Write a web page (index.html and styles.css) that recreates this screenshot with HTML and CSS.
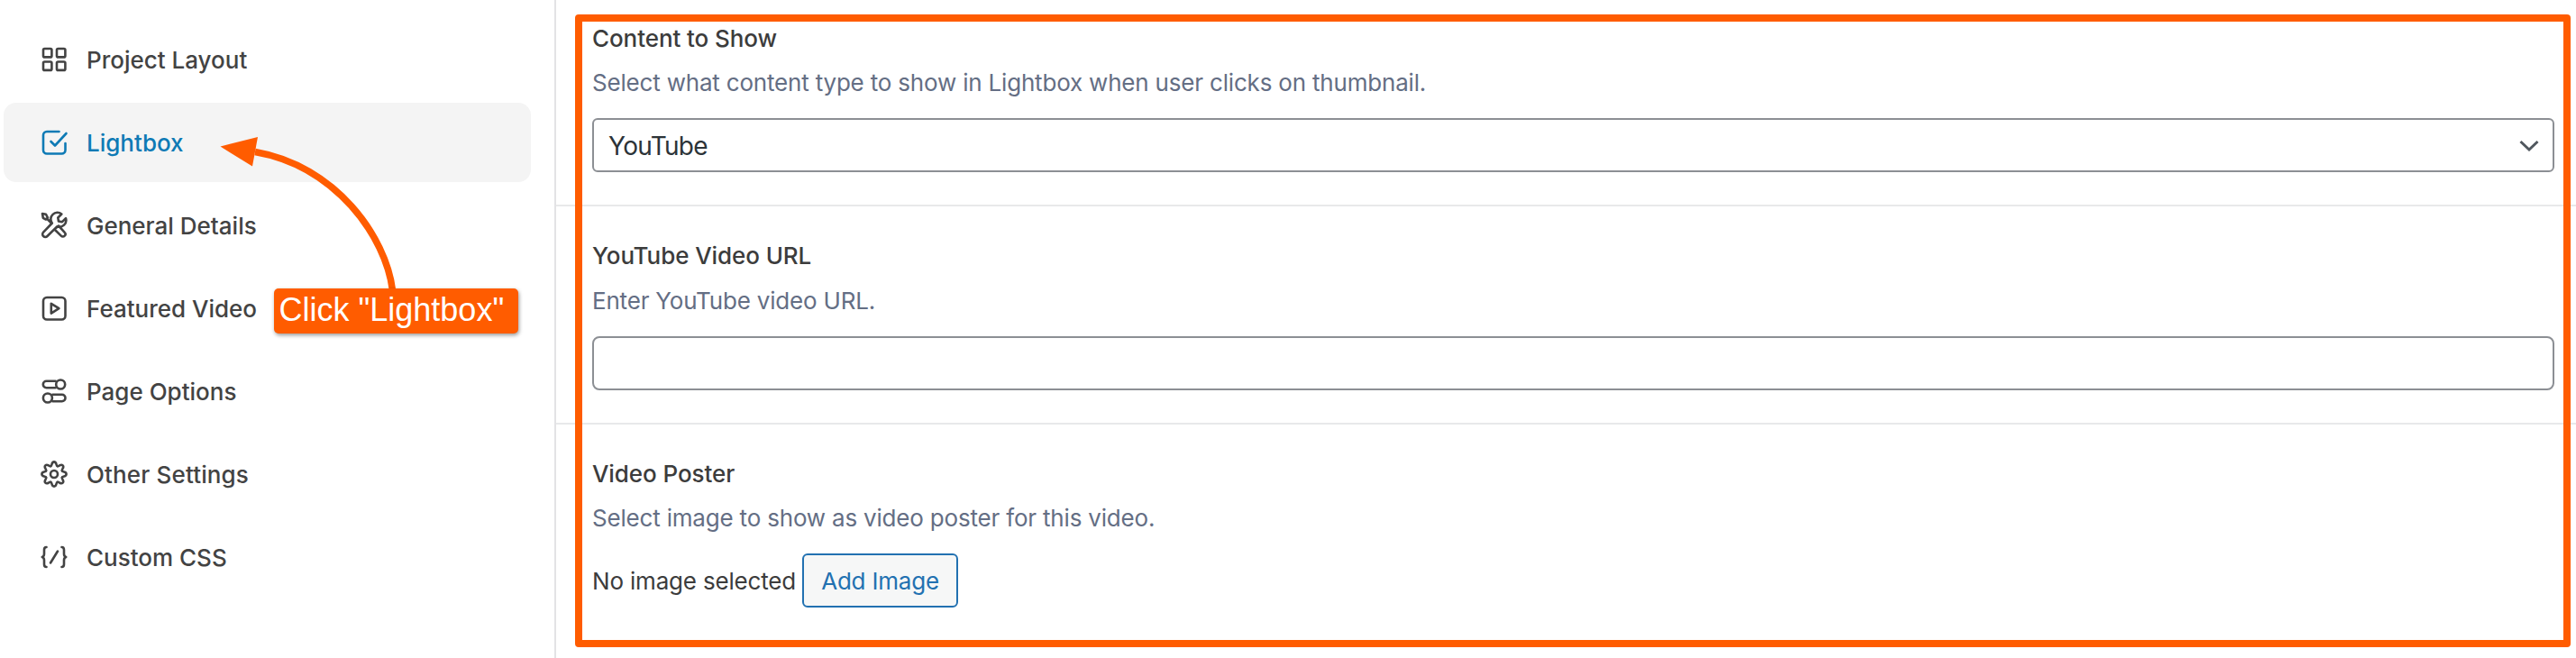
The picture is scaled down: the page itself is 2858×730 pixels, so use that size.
FILE: index.html
```html
<!DOCTYPE html>
<html lang="en">
<head>
<meta charset="utf-8">
<title>Project settings</title>
<link rel="stylesheet" href="styles.css">
</head>
<body>
<div class="page">
  <nav class="sidebar">
    <a class="item"><svg class="icon" viewBox="0 0 32 32"><rect x="4" y="4" width="9.400" height="9.400" rx="1.500"/><rect x="19" y="4" width="9.400" height="9.400" rx="1.500"/><rect x="4" y="18.500" width="9.400" height="9.400" rx="1.500"/><rect x="19" y="18.500" width="9.400" height="9.400" rx="1.500"/></svg><span>Project Layout</span></a>
    <a class="item active"><svg class="icon" viewBox="0 0 32 32"><path d="M21.500 4H8a4 4 0 0 0-4 4v16.500a4 4 0 0 0 4 4h16.500a4 4 0 0 0 4-4V17M12.500 15l4.500 4.500L29.500 6"/></svg><span>Lightbox</span></a>
    <a class="item"><svg class="icon" viewBox="0 0 32 32"><path d="M3 3l4 .8 2 3.700-2 2-3.200-1.700zM8 8.500l5.500 5.500M18 19l3-2.500 6.700 7.300a2.700 2.700 0 0 1-3.900 3.900L17 21M13.800 13.500a7.300 7.300 0 0 1 10.500-10l-4 4 .7 4 4 .7 4-4a7.300 7.300 0 0 1-9.500 9L8.500 28a3 3 0 0 1-4.400-4.300z"/></svg><span>General Details</span></a>
    <a class="item"><svg class="icon" viewBox="0 0 32 32"><rect x="4" y="4" width="24.500" height="24.500" rx="4"/><path d="M12.800 10.800v10.800l8.600-5.400z"/></svg><span>Featured Video</span></a>
    <a class="item"><svg class="icon" viewBox="0 0 32 32"><path d="M17.600 12.200H7.500a3.700 3.700 0 0 1 0-7.400h10.100M14.400 27.200H24.800a3.700 3.700 0 0 0 0-7.400H14.400"/><circle cx="23.200" cy="8.500" r="5"/><circle cx="8.900" cy="23.500" r="5"/></svg><span>Page Options</span></a>
    <a class="item wide"><svg class="icon" viewBox="0 0 32 32"><defs><path id="tooth" d="M12.300 7.100C14.200 6.300 12.800 2.400 16 2.400S17.800 6.300 19.700 7.100"/></defs><circle cx="16" cy="16" r="4"/><use href="#tooth"/><use href="#tooth" transform="rotate(45 16 16)"/><use href="#tooth" transform="rotate(90 16 16)"/><use href="#tooth" transform="rotate(135 16 16)"/><use href="#tooth" transform="rotate(180 16 16)"/><use href="#tooth" transform="rotate(225 16 16)"/><use href="#tooth" transform="rotate(270 16 16)"/><use href="#tooth" transform="rotate(315 16 16)"/></svg><span>Other Settings</span></a>
    <a class="item"><svg class="icon" viewBox="0 0 32 32"><path d="M7.500 5C5.500 5 5 6 5 8v4.500c0 2-.7 3-2.200 3.500 1.500.5 2.200 1.500 2.200 3.500V24c0 2 .5 3 2.500 3M24.500 5c2 0 2.500 1 2.500 3v4.500c0 2 .7 3 2.200 3.500-1.500.5-2.200 1.500-2.200 3.500V24c0 2-.5 3-2.500 3M20 9.500l-8 13"/></svg><span>Custom CSS</span></a>
  </nav>
  <main class="content">
    <section class="field">
      <h3 class="label">Content to Show</h3>
      <p class="desc">Select what content type to show in Lightbox when user clicks on thumbnail.</p>
      <div class="select"><span>YouTube</span><svg class="chevron" viewBox="0 0 22 14"><path d="M1.500 2L11 11 20.500 2"/></svg></div>
    </section>
    <section class="field">
      <h3 class="label">YouTube Video URL</h3>
      <p class="desc low">Enter YouTube video URL.</p>
      <div class="input"></div>
    </section>
    <section class="field">
      <h3 class="label">Video Poster</h3>
      <p class="desc">Select image to show as video poster for this video.</p>
      <div class="picker"><span>No image selected</span><button class="button">Add Image</button></div>
    </section>
  </main>
  <div class="frame"></div>
  <svg class="arrow" viewBox="240 140 210 185"><path class="curve" d="M283 168.500C372 184 428 262 435.500 322"/><path class="head" d="M244.500 162.500L286 152L280 184.500z"/></svg>
  <div class="callout">Click "Lightbox"</div>
</div>
</body>
</html>
```
FILE: styles.css
```css
body { margin: 0; background: #fff; }
.page { position: relative; display: flex; width: 2858px; height: 730px; overflow: hidden; font-family: Inter, "Liberation Sans", sans-serif; font-size: 26px; color: #3c3c3c; white-space: nowrap; }
.sidebar { box-sizing: border-box; flex: none; width: 617px; padding: 22px 26px 0 4px; border-right: 2px solid #e3e3e5; display: flex; flex-direction: column; gap: 4px; }
.item { display: flex; align-items: center; gap: 20px; height: 88px; padding-left: 40px; border-radius: 14px; font-weight: 500; color: #434343; }
.item.active { background: #f4f4f4; color: #0e7ab5; }
.item.wide { letter-spacing: .14px; }
.icon { width: 32px; height: 32px; fill: none; stroke: currentColor; stroke-width: 2.6; stroke-linecap: round; stroke-linejoin: round; }
.content { flex: 1; display: flex; flex-direction: column; }
.field { box-sizing: border-box; height: 242px; padding: 39px 24px 0 40px; border-bottom: 2px solid #e8e9ea; }
.field:first-child { height: 229px; padding-top: 27px; }
.field:last-child { border-bottom: 0; }
.label { margin: 0; font-size: 26px; font-weight: 500; line-height: 32px; letter-spacing: -.08px; }
.desc { margin: 17px 0 0; line-height: 32px; letter-spacing: -.19px; color: #646e84; }
.desc.low { margin-top: 18px; }
.select, .input { box-sizing: border-box; height: 60px; margin-top: 23px; border: 2px solid #8c8f94; border-radius: 6px; }
.input { border-radius: 8px; }
.desc.low + .input { margin-top: 23px; }
.select { display: flex; align-items: center; justify-content: space-between; padding: 1px 15px 0 16px; font-size: 28px; letter-spacing: -.7px; color: #2c3338; }
.chevron { width: 22px; height: 14px; fill: none; stroke: #50575e; stroke-width: 3; }
.picker { display: flex; align-items: center; gap: 7px; margin-top: 23px; letter-spacing: -.18px; }
.button { box-sizing: border-box; width: 173px; height: 60px; padding: 0; border: 2px solid #2271b1; border-radius: 6px; background: #f6f7f7; color: #2271b1; font: inherit; letter-spacing: -.2px; }
.frame { position: absolute; box-sizing: border-box; left: 638px; top: 16px; width: 2214px; height: 702px; border: 8px solid #ff5c00; border-radius: 4px; }
.arrow { position: absolute; left: 240px; top: 140px; width: 210px; height: 185px; }
.curve { fill: none; stroke: #ff5c00; stroke-width: 7.5; }
.head { fill: #ff5c00; }
.callout { position: absolute; box-sizing: border-box; left: 304px; top: 320px; width: 271px; height: 50px; padding-left: 5.5px; border-radius: 5px; background: #ff5c00; color: #fff; font: 36px/47px "Liberation Sans", sans-serif; box-shadow: 1px 2px 4px rgba(0,0,0,.4); }
```
